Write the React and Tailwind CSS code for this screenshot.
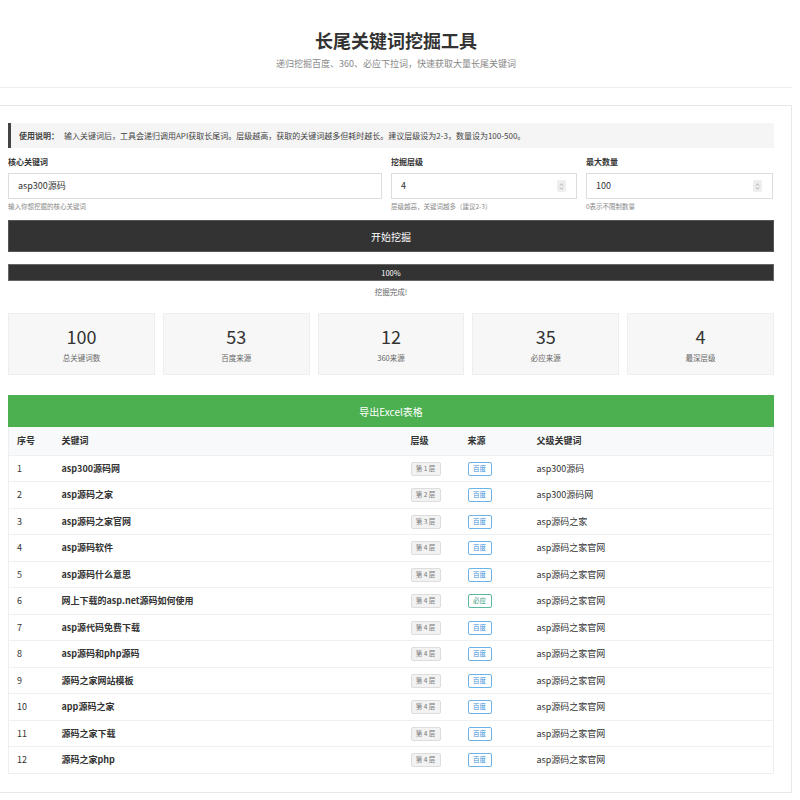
import React from "react";

const rows = [
  [1, "asp300源码网", 1, "百度", "asp300源码"],
  [2, "asp源码之家", 2, "百度", "asp300源码网"],
  [3, "asp源码之家官网", 3, "百度", "asp源码之家"],
  [4, "asp源码软件", 4, "百度", "asp源码之家官网"],
  [5, "asp源码什么意思", 4, "百度", "asp源码之家官网"],
  [6, "网上下载的asp.net源码如何使用", 4, "必应", "asp源码之家官网"],
  [7, "asp源代码免费下载", 4, "百度", "asp源码之家官网"],
  [8, "asp源码和php源码", 4, "百度", "asp源码之家官网"],
  [9, "源码之家网站模板", 4, "百度", "asp源码之家官网"],
  [10, "app源码之家", 4, "百度", "asp源码之家官网"],
  [11, "源码之家下载", 4, "百度", "asp源码之家官网"],
  [12, "源码之家php", 4, "百度", "asp源码之家官网"],
];

const stats = [
  ["100", "总关键词数"],
  ["53", "百度来源"],
  ["12", "360来源"],
  ["35", "必应来源"],
  ["4", "最深层级"],
];

const Spinner = () => (
  <span className="flex flex-col items-center justify-center w-[9px] h-[12px] bg-[#eee] rounded-[2px] text-[#999]">
    <svg width="5" height="3" viewBox="0 0 6 4">
      <path d="M1 3.5L3 1L5 3.5" fill="none" stroke="currentColor" strokeWidth="0.9" />
    </svg>
    <svg width="5" height="3" viewBox="0 0 6 4" className="mt-[1px]">
      <path d="M1 0.5L3 3L5 0.5" fill="none" stroke="currentColor" strokeWidth="0.9" />
    </svg>
  </span>
);

const Field = ({ label, value, hint, spin }) => (
  <div className="flex flex-col">
    <label className="text-[8px] font-bold text-[#333] leading-[10px] mb-[6px]">{label}</label>
    <div className="h-[26px] border border-[#ddd] flex items-center justify-between pl-[9px] pr-[10px] bg-white">
      <span className="text-[9px] text-[#333]">{value}</span>
      {spin && <Spinner />}
    </div>
    <span className="text-[6.5px] text-[#888] mt-[3px] leading-[9px]">{hint}</span>
  </div>
);

export default function App() {
  return (
    <div
      className="w-[800px] bg-white text-[#333]"
      style={{ fontFamily: '"Noto Sans CJK SC", "Noto Sans", sans-serif' }}
    >
      <header className="w-[792px] h-[88px] border-b border-[#eee] flex flex-col items-center pt-[28px]">
        <h1 className="text-[18px] font-bold leading-[24px] text-[#333]">长尾关键词挖掘工具</h1>
        <p className="text-[9px] text-[#888] mt-[6px] leading-[12px]">
          递归挖掘百度、360、必应下拉词，快速获取大量长尾关键词
        </p>
      </header>

      <main className="w-[792px] mt-[17px] border border-[#e8e8e8] border-l-0 pl-[8px] pr-[17px] pt-[17px] pb-[18px]">
        <div className="h-[25px] bg-[#f5f5f5] border-l-[3px] border-[#444] flex items-center pl-[8px] text-[8px] text-[#444]">
          <b className="mr-[5px]">使用说明：</b>
          输入关键词后，工具会递归调用API获取长尾词。层级越高，获取的关键词越多但耗时越长。建议层级设为2-3，数量设为100-500。
        </div>

        <div className="grid grid-cols-[374px_186px_187px] gap-[9px] mt-[9px]">
          <Field label="核心关键词" value="asp300源码" hint="输入你想挖掘的核心关键词" />
          <Field label="挖掘层级" value="4" hint="层级越高，关键词越多（建议2-3）" spin />
          <Field label="最大数量" value="100" hint="0表示不限制数量" spin />
        </div>

        <button className="mt-[9px] w-full h-[32px] bg-[#333] border border-[#555] text-white text-[10px]">
          开始挖掘
        </button>

        <div className="mt-[12px] h-[17px] bg-[#333] border border-[#666] flex items-center justify-center text-white text-[7.5px]">
          100%
        </div>
        <p className="text-center text-[7.5px] text-[#666] mt-[5px] leading-[12px]">挖掘完成!</p>

        <div className="grid grid-cols-5 gap-[8px] mt-[15px]">
          {stats.map(([n, l]) => (
            <div key={l} className="h-[62px] bg-[#f7f7f7] border border-[#eee] flex flex-col items-center justify-center">
              <span className="text-[18px] leading-[22px] text-[#333]">{n}</span>
              <span className="text-[7.5px] text-[#666] mt-[5px]">{l}</span>
            </div>
          ))}
        </div>

        <button className="mt-[20px] w-full h-[32px] bg-[#4caf50] text-white text-[10px]">
          导出Excel表格
        </button>

        <table className="w-full border border-[#eee] border-t-0 border-collapse text-[9px]">
          <colgroup>
            <col className="w-[45px]" />
            <col className="w-[349px]" />
            <col className="w-[57px]" />
            <col className="w-[69px]" />
            <col />
          </colgroup>
          <thead>
            <tr className="h-[28px] bg-[#f8f9fa] text-left">
              <th className="pl-[8px] font-bold">序号</th>
              <th className="pl-[8px] font-bold">关键词</th>
              <th className="pl-[8px] font-bold">层级</th>
              <th className="pl-[8px] font-bold">来源</th>
              <th className="pl-[8px] font-bold">父级关键词</th>
            </tr>
          </thead>
          <tbody>
            {rows.map(([i, kw, lv, src, parent]) => (
              <tr key={i} className="h-[26.5px] border-t border-[#f0f0f0]">
                <td className="pl-[8px]">{i}</td>
                <td className="pl-[8px] font-bold">{kw}</td>
                <td className="pl-[8px]">
                  <span className="inline-flex items-center justify-center w-[30px] h-[14px] bg-[#f2f2f2] border border-[#ddd] rounded-[2px] text-[6.5px] text-[#777]">
                    第 {lv} 层
                  </span>
                </td>
                <td className="pl-[8px]">
                  <span
                    className={
                      src === "必应"
                        ? "inline-flex items-center justify-center w-[24px] h-[14px] border border-[#5cb8a0] rounded-[2px] text-[6.5px] text-[#3a9a7f] bg-white"
                        : "inline-flex items-center justify-center w-[24px] h-[14px] border border-[#6db3e8] rounded-[2px] text-[6.5px] text-[#3b8fd8] bg-white"
                    }
                  >
                    {src}
                  </span>
                </td>
                <td className="pl-[8px]">{parent}</td>
              </tr>
            ))}
          </tbody>
        </table>
      </main>
    </div>
  );
}
